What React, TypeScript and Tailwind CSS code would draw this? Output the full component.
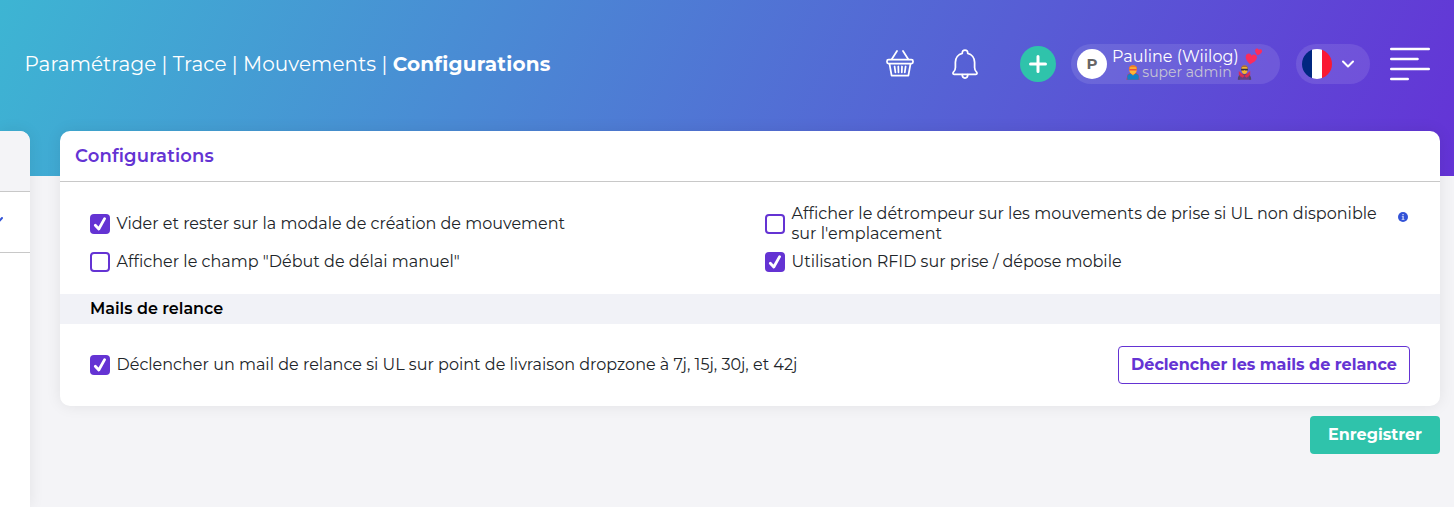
import React from "react";

function Check({ checked = false }: { checked?: boolean }) {
  return (
    <span
      className={
        checked
          ? "flex size-5 shrink-0 items-center justify-center rounded bg-[#6433d3]"
          : "flex size-5 shrink-0 rounded border-2 border-[#6433d3] bg-white"
      }
    >
      {checked && (
        <svg className="size-5" viewBox="0 0 20 20" fill="none">
          <path d="M5.3 11.2 8.8 15 14.6 4.6" stroke="#fff" strokeWidth="2.8" strokeLinecap="round" strokeLinejoin="round" />
        </svg>
      )}
    </span>
  );
}

function Basket() {
  return (
    <svg className="h-7 w-7" viewBox="0 0 28 28" fill="none" stroke="#fff" strokeWidth="1.75" strokeLinecap="round" strokeLinejoin="round">
      <path d="M5.900 9 11 1M22.100 9 17 1" />
      <rect x="1" y="9.6" width="26" height="4" rx="1.6" />
      <path d="M3.500 13.800 5.600 25.500h16.800l2.100-11.700M8.600 16.500l.8 5.800M12.300 16.500l.2 5.800M16 16.500l-.2 5.800M19.600 16.500l-.8 5.800" />
    </svg>
  );
}

function Bell() {
  return (
    <svg className="h-[30px] w-[26px]" viewBox="0 0 26 30" fill="none" stroke="#fff" strokeWidth="1.75" strokeLinecap="round" strokeLinejoin="round">
      <path d="M10.300 4.300C10.100 2.200 11.300 1 13 1s2.900 1.200 2.700 3.300c4 1 6.900 4.700 6.900 9v5.200c0 2.200.7 3.300 1.800 4.300.9.800.9 2.600-.5 2.600H2.100c-1.400 0-1.400-1.800-.5-2.600 1.100-1 1.800-2.100 1.800-4.300v-5.200c0-4.300 2.900-8 6.900-9Z" />
      <path d="M10.200 25.600c0 2 1.200 3.400 2.800 3.400s2.800-1.400 2.800-3.400" />
    </svg>
  );
}

const HEART = "M0 5.300C-3.300 2.800-5.700.9-5.700-1.900c0-3.300 4.300-4.500 5.700-1.400 1.400-3.100 5.700-1.900 5.700 1.400C5.700.9 3.300 2.800 0 5.300Z";

function Hearts() {
  return (
    <svg className="h-[17px] w-[17px]" viewBox="0 0 17 17" fill="#fb2c5c">
      <path d={HEART} transform="translate(6 11) rotate(10)" />
      <path d={HEART} transform="translate(13.300 4) rotate(14) scale(.62)" />
    </svg>
  );
}

function Hero() {
  return (
    <svg className="h-[15px] w-[14px]" viewBox="0 0 14 15">
      <path d="M.3 14.800 1.600 9.500 4 8h6l2.400 1.500 1.300 5.300Z" fill="#c9404f" />
      <path d="M1.300 14.800v-3.500C1.300 9.500 3.600 8.500 7 8.500s5.700 1 5.700 2.800v3.500Z" fill="#1280c8" />
      <path d="M4.800 8.400 7 10.500l2.200-2.100-.8-1.500H5.600Z" fill="#ee9d2d" />
      <path d="M3.200 4.200C3.200 1.700 4.700.5 7 .5s3.800 1.200 3.800 3.700C10.800 7 9.400 9 7 9S3.200 7 3.200 4.200Z" fill="#ffb735" />
      <path d="M2.900 4.200C2.700 1.500 4.300.3 7 .3s4.300 1.200 4.100 3.900L9.500 2.300h-5Z" fill="#ef7b28" />
      <path d="M3.200 3.900h7.600v1.600H3.200Z" fill="#e8503a" />
    </svg>
  );
}

function Villain() {
  return (
    <svg className="h-[15px] w-[15px]" viewBox="0 0 15 15">
      <path d="M1.500 14.800c0-4 1.700-6.300 6-6.300s6 2.300 6 6.300Z" fill="#654080" />
      <path d="M1.800 6 7.500 11l5.700-5v4.200L9.500 12.800 7.500 11l-2 1.800-3.700-2.600Z" fill="#d92d54" />
      <path d="M.8 14.800c0-2.500.6-4 2-4.800v4.800ZM14.200 14.800c0-2.500-.6-4-2-4.800v4.800Z" fill="#51466b" />
      <path d="M4.400 4.200C4.400 1.600 5.600.5 7.500.5s3.100 1.100 3.100 3.700c0 2.900-1.300 4.800-3.100 4.800S4.400 7.100 4.400 4.200Z" fill="#f5b72f" />
      <path d="M4.100 4C4 1.500 5.200.3 7.500.3S11 1.500 10.900 4L9.500 2.100h-4Z" fill="#a56a3c" />
      <path d="M4.100 3.700h6.800v1.800H8.400l-.9-.5-.9.500H4.100Z" fill="#343044" />
    </svg>
  );
}

export default function App() {
  return (
    <div className="h-[507px] w-full overflow-hidden bg-[#f4f4f7] font-['Montserrat','Inter',sans-serif] text-base leading-5 text-[#212529]">
      <header className="h-[176px] bg-[linear-gradient(115deg,#3db5d3_0%,#6433d6_100%)] pt-11">
        <div className="flex h-10 items-center pr-6 pl-[24.500px] text-white">
          <nav className="flex-1 text-xl leading-10 whitespace-nowrap">
            <span className="tracking-[0.065px]">Paramétrage | Trace | Mouvements | </span>
            <b className="font-bold tracking-[0.2px]">Configurations</b>
          </nav>
          <div className="mr-[38px] flex w-7 items-center"><Basket /></div>
          <div className="mr-[42px] flex w-[26px] items-center"><Bell /></div>
          <div className="mr-[15px] flex size-9 items-center justify-center rounded-full bg-[#2fc3ab]">
            <svg className="size-[18px]" viewBox="0 0 18 18" stroke="#fff" strokeWidth="3" strokeLinecap="round"><path d="M9 1.500v15M1.500 9h15" /></svg>
          </div>
          <div className="mr-4 flex h-10 w-[209px] items-center rounded-full bg-white/10 pl-1.5">
            <div className="flex size-[30px] shrink-0 items-center justify-center rounded-full bg-white text-[15px] font-bold text-[#666]">P</div>
            <div className="ml-[5px] w-[150px]">
              <div className="flex h-[17px] items-center justify-between whitespace-nowrap"><span>Pauline (Wiilog)</span><Hearts /></div>
              <div className="flex h-[15px] items-center justify-center gap-[2px] pl-1 text-sm leading-[15px] whitespace-nowrap text-[#c6c4d4]"><Hero /><span>super admin</span><span className="ml-[3px] flex"><Villain /></span></div>
            </div>
          </div>
          <div className="mr-5 flex h-10 w-[74px] items-center rounded-full bg-white/10 pl-1.5">
            <svg className="size-[30px]" viewBox="0 0 30 30">
              <defs><clipPath id="flag"><circle cx="15" cy="15" r="15" /></clipPath></defs>
              <g clipPath="url(#flag)"><path fill="#002780" d="M0 0h10v30H0z" /><path fill="#fff" d="M10 0h10v30H10z" /><path fill="#f91832" d="M20 0h10v30H20z" /></g>
            </svg>
            <svg className="ml-2.5 h-2 w-3" viewBox="0 0 12 8" fill="none" stroke="#fff" strokeWidth="2" strokeLinecap="round" strokeLinejoin="round"><path d="m1 1.500 5 5 5-5" /></svg>
          </div>
          <svg className="h-[34px] w-10" viewBox="0 0 40 34" stroke="#fff" strokeWidth="2.400" strokeLinecap="round"><path d="M1.200 2h37.600M1.200 12h26.400M1.200 22h37.600M1.200 32h16.600" /></svg>
        </div>
      </header>

      <main className="-mt-[45px] flex items-start">
        <aside className="mr-[30px] h-[376px] w-[30px] shrink-0 overflow-hidden rounded-tr-[10px] bg-white shadow-[0_0_15px_rgba(0,0,0,0.08)]">
          <div className="h-[61px] border-b border-[#c8c8c8] bg-[#f4f4f7]" />
          <div className="flex h-[61px] items-center border-b border-[#c8c8c8]">
            <svg className="mb-1 h-2 w-3" viewBox="0 0 12 8" fill="none" stroke="#3353d7" strokeWidth="2" strokeLinecap="round"><path d="m-7 1.500 5 5 4-4.500" /></svg>
          </div>
        </aside>
        <div className="flex w-[1380px] shrink-0 flex-col">
          <section className="h-[275px] overflow-hidden rounded-[10px] bg-white shadow-[0_0_15px_rgba(0,0,0,0.08)]">
            <h1 className="h-[51px] border-b border-[#c8c8c8] pl-[15px] text-lg leading-[50px] font-semibold tracking-[0.15px] text-[#6433d3]">Configurations</h1>
            <div className="grid h-[112px] grid-cols-[675px_1fr] grid-rows-[40px_20px] gap-y-[8px] px-[30px] pt-[22px]">
              <label className="flex items-center gap-[6.500px] whitespace-nowrap"><Check checked /><span>Vider et rester sur la modale de création de mouvement</span></label>
              <div className="flex items-start justify-between">
                <label className="flex items-center gap-[6.500px] tracking-[0.02px] whitespace-nowrap"><Check /><span>Afficher le détrompeur sur les mouvements de prise si UL non disponible<br />sur l'emplacement</span></label>
                <svg className="mt-2 mr-0.5 size-[10px]" viewBox="0 0 10 10"><circle cx="5" cy="5" r="5" fill="#3353d7" /><path d="M4.300 2h1.500v1.200H4.300ZM3.800 4h2v3.200h.7V8H3.600v-.8h.8V4.800h-.6Z" fill="#c4cdf5" /></svg>
              </div>
              <label className="flex items-center gap-[6.500px] tracking-[0.02px] whitespace-nowrap"><Check /><span>Afficher le champ "Début de délai manuel"</span></label>
              <label className="flex items-center gap-[6.500px] whitespace-nowrap"><Check checked /><span>Utilisation RFID sur prise / dépose mobile</span></label>
            </div>
            <h2 className="h-[30px] bg-[#f1f2f7] pl-[30px] leading-[29px] font-semibold text-black">Mails de relance</h2>
            <div className="flex h-[82px] items-center justify-between px-[30px]">
              <label className="flex items-center gap-[6.500px] tracking-[0.01px] whitespace-nowrap"><Check checked /><span>Déclencher un mail de relance si UL sur point de livraison dropzone à 7j, 15j, 30j, et 42j</span></label>
              <button className="h-[38px] w-[292px] rounded border border-[#6433d3] font-bold whitespace-nowrap text-[#6433d3]">Déclencher les mails de relance</button>
            </div>
          </section>
          <button className="mt-2.5 h-[38px] w-[130px] self-end rounded bg-[#2fc3ab] font-bold text-white">Enregistrer</button>
        </div>
      </main>
    </div>
  );
}
